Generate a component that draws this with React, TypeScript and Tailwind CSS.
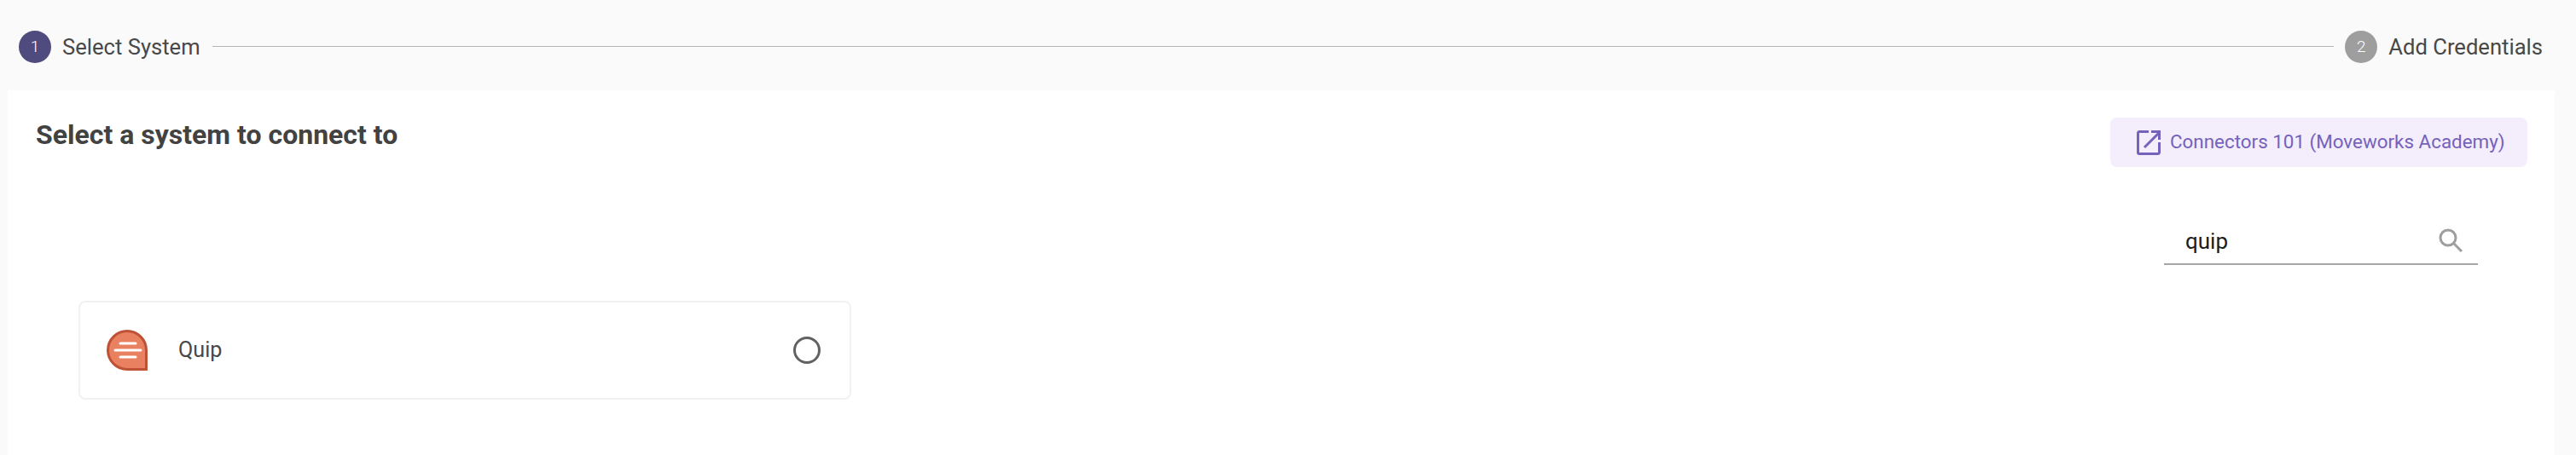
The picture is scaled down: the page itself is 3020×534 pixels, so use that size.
export default function App() {
  return (
    <div className="h-[534px] w-[3020px] overflow-hidden bg-[#fafafa] font-['Roboto',sans-serif]">
      <div className="flex h-[106px] w-[2995px] items-start pt-[36px] pl-[22px] pr-[14px]">
        <div className="flex h-[38px] w-[38px] shrink-0 items-center justify-center rounded-full bg-[#4f4b7e] text-[19px] font-light text-white">1</div>
        <span className="ml-[13px] whitespace-nowrap text-[25.6px] leading-[38px] font-normal text-[#484848]">Select System</span>
        <div className="mt-[18px] mr-[13px] ml-[14px] h-[1px] flex-1 bg-[#b5b5b5]" />
        <div className="flex h-[38px] w-[38px] shrink-0 items-center justify-center rounded-full bg-[#9e9e9e] text-[19px] font-light text-white">2</div>
        <span className="ml-[13px] whitespace-nowrap text-[25.6px] leading-[38px] font-normal text-[#484848]">Add Credentials</span>
      </div>
      <div className="ml-[9px] h-[428px] w-[2986px] bg-white">
        <div className="flex items-start justify-between pt-[32px] pl-[33px] pr-[32px]">
          <h2 className="mt-[1px] text-[32px] leading-[38px] font-bold text-[#424242]">Select a system to connect to</h2>
          <button className="flex h-[58px] w-[489px] items-center rounded-[8px] bg-[#f3edfc] pl-[31px] text-[22.4px] font-normal whitespace-nowrap text-[#7562bb]">
            <svg width="28" height="29" viewBox="0 0 28 29" fill="none" stroke="#7562bb" strokeWidth="3" className="shrink-0">
              <path d="M14 1.500H3a1.500 1.500 0 0 0-1.500 1.500v23A1.500 1.500 0 0 0 3 27.500h22a1.500 1.500 0 0 0 1.500-1.500V14" />
              <path d="M9 20 26 3" />
              <path d="M17 1.500h9.500V11" />
            </svg>
            <span className="ml-[11px]">Connectors 101 (Moveworks Academy)</span>
          </button>
        </div>
        <div className="mt-[63px] flex justify-end pr-[90px]">
          <div className="flex h-[52px] w-[368px] items-center border-b-2 border-[#a6a6a6] pb-[2px] pl-[25px] pr-[18px]">
            <span className="flex-1 text-[26px] text-[#1d1d1d]">quip</span>
            <svg width="28" height="28" viewBox="0 0 28 28" fill="none" stroke="#9e9e9e" strokeWidth="3" className="-translate-y-[1px]">
              <circle cx="11" cy="11" r="9" />
              <path d="M17.500 17.500 27 27" />
            </svg>
          </div>
        </div>
        <div className="mt-[42px] ml-[83px] flex h-[116px] w-[906px] items-center rounded-[8px] border-2 border-[#f1f1f1] pl-[31px] pr-[34px]">
          <svg width="48" height="48" viewBox="0 0 48 48" className="shrink-0">
            <path d="M24 1.500C11.600 1.500 1.500 11.600 1.500 24S11.600 46.500 24 46.500h22.500V24C46.500 11.600 36.400 1.500 24 1.500Z" fill="#e9805f" stroke="#bd5236" strokeWidth="3" />
            <path d="M16 16h18M10 24h30M16 32h18" stroke="#fff" strokeWidth="3" strokeLinecap="round" />
          </svg>
          <span className="ml-[36px] flex-1 text-[25.2px] font-normal text-[#484848]">Quip</span>
          <div className="h-[32px] w-[32px] rounded-full border-[3px] border-[#616161]" />
        </div>
      </div>
    </div>
  );
}
